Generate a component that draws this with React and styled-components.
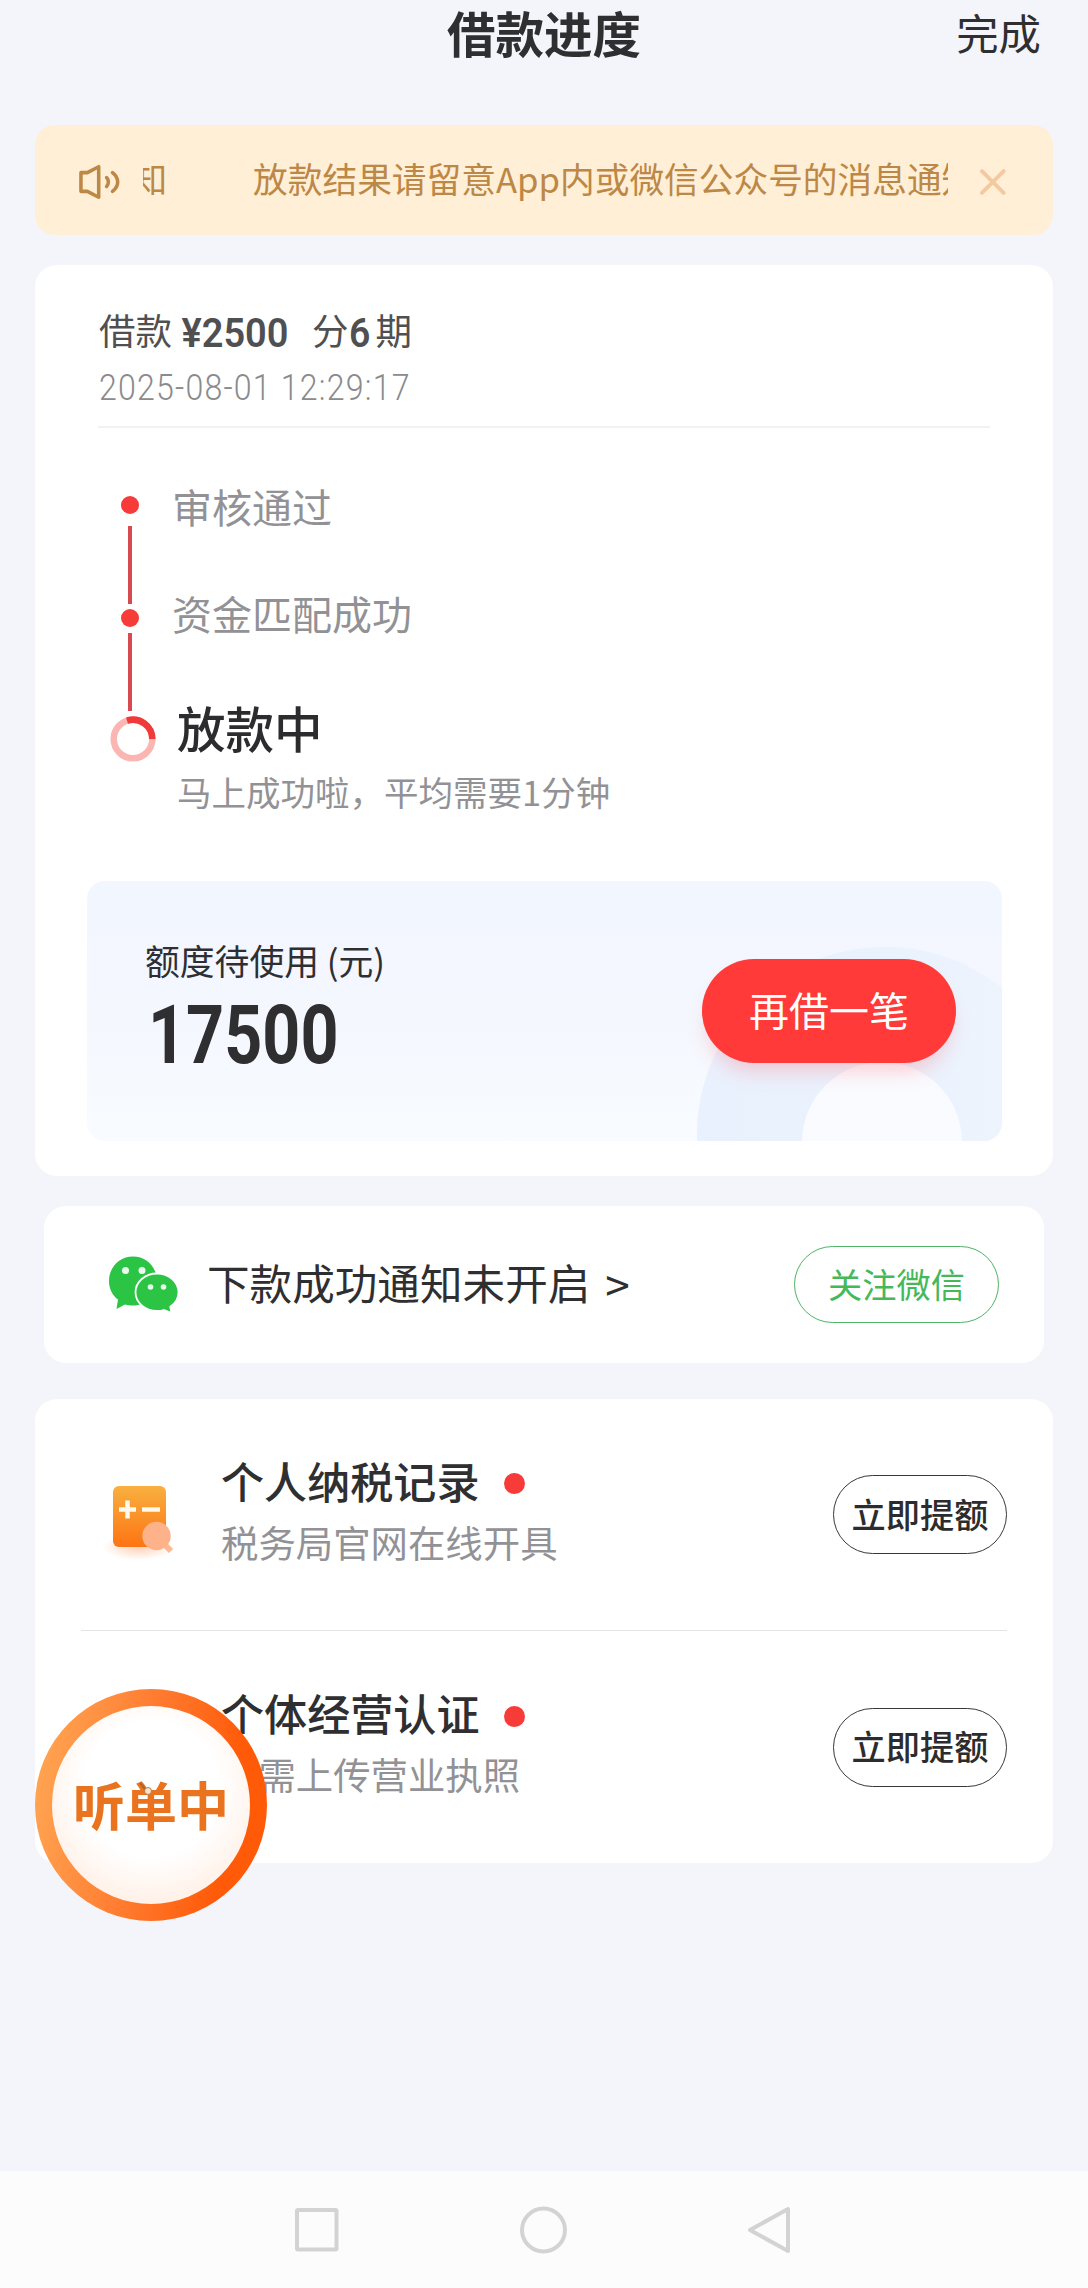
import React from 'react';
import styled, { createGlobalStyle } from 'styled-components';

const GlobalStyle = createGlobalStyle`
  * {
    box-sizing: border-box;
  }

  body {
    margin: 0;
    background: #f4f5fa;
    color: #2f2f31;
    font-family: "Noto Sans CJK SC", sans-serif;
  }
`;

const Page = styled.div`
  display: flex;
  flex-direction: column;
  width: 1088px;
  height: 2288px;
  overflow: hidden;
  background: #f4f5fa;
`;

const Header = styled.header`
  display: grid;
  grid-template-columns: 1fr auto 1fr;
  align-items: center;
  height: 64px;
  padding: 0 47px;
`;

const Title = styled.h1`
  grid-column: 2;
  margin: 0;
  font-size: 48.5px;
  font-weight: 700;
  line-height: 64px;
`;

const Done = styled.span`
  justify-self: end;
  font-size: 42.4px;
  line-height: 64px;
`;

const Notice = styled.div`
  display: flex;
  align-items: center;
  height: 110px;
  margin: 61px 35px 0;
  padding: 4px 46px 0 43px;
  border-radius: 20px;
  background: #feefd6;
`;

const Marquee = styled.div`
  display: flex;
  justify-content: flex-start;
  flex: none;
  gap: 86px;
  width: 805px;
  margin: -9px 31px 0 23px;
  overflow: hidden;
  color: #bd8746;
  font-size: 34.7px;
  line-height: 60px;
  white-space: nowrap;
`;

const MarqueeText = styled.span`
  flex: none;
  margin-left: ${props => props.$shift || 0}px;
`;

const Card = styled.section`
  margin: ${props => props.$margin};
  padding-bottom: ${props => props.$bottom || 0}px;
  border-radius: 22px;
  background: #fff;
`;

const LoanHead = styled.div`
  display: flex;
  flex-direction: column;
  height: 163px;
  margin: 0 63px;
  padding-top: 37px;
  border-bottom: 2px solid #f2f2f4;
`;

const LoanTitle = styled.div`
  display: flex;
  align-items: center;
  height: 54px;
  padding-left: 1px;
  color: #505052;
  font-size: 36.5px;
`;

const Digits = styled.span`
  display: block;
  width: ${props => props.$width}px;
  padding-top: ${props => props.$drop || 0}px;
  font-family: Roboto, sans-serif;
  font-size: ${props => props.$size}px;
  font-weight: ${props => props.$weight};
  letter-spacing: ${props => props.$spacing || 0}px;
  line-height: 1;
  white-space: nowrap;
  transform: scaleX(${props => props.$stretch});
  transform-origin: 0 50%;
`;

const LoanTime = styled.div`
  height: 40px;
  margin-top: 14px;
  padding-left: 1px;
  color: #8b8b8d;
`;

const Timeline = styled.div`
  display: flex;
  height: 453px;
  padding: 68px 0 0 75px;
`;

const Rail = styled.div`
  display: flex;
  flex-direction: column;
  align-items: center;
  width: 40px;
`;

const Dot = styled.i`
  flex: none;
  width: ${props => props.$size}px;
  height: ${props => props.$size}px;
  margin-top: ${props => props.$drop || 0}px;
  border-radius: 50%;
  background: #f73b38;
`;

const Line = styled.i`
  flex: none;
  width: 4px;
  height: 78px;
  margin: ${props => props.$margin};
  background: #d74b50;
`;

const Ring = styled.svg`
  flex: none;
  width: 46px;
  height: 46px;
  margin: 5px 0 0 6px;
`;

const Steps = styled.div`
  display: flex;
  flex-direction: column;
  padding-left: 22px;
  margin-top: -10px;
`;

const Step = styled.div`
  height: ${props => props.$height}px;
  padding-left: ${props => props.$indent || 0}px;
  color: ${props => props.$active ? '#2c2c2e' : '#929296'};
  font-size: ${props => props.$active ? 48.5 : 40}px;
  font-weight: ${props => props.$active ? 500 : 400};
  line-height: 1;
`;

const StepHint = styled.div`
  padding-left: 5px;
  color: #929296;
  font-size: 34.5px;
  line-height: 1;
  white-space: nowrap;
`;

const Quota = styled.div`
  position: relative;
  display: flex;
  align-items: flex-start;
  justify-content: space-between;
  height: 260px;
  margin: 0 51px 0 52px;
  padding: 0 46px 0 58px;
  border-radius: 18px;
  overflow: hidden;
  background: linear-gradient(180deg, #f2f6fe 0%, #f4f7fe 50%, #f8fbff 100%);
`;

const QuotaArt = styled.svg`
  position: absolute;
  right: 0;
  bottom: 0;
  width: 320px;
  height: 260px;
`;

const QuotaInfo = styled.div`
  padding-top: 62px;
`;

const QuotaLabel = styled.div`
  height: 51px;
  font-size: 34.8px;
  line-height: 1;
  white-space: nowrap;
`;

const QuotaAmount = styled.div`
  padding-left: 3px;
`;

const BorrowButton = styled.button`
  position: relative;
  width: 254px;
  height: 104px;
  margin-top: 78px;
  padding: 0 0 4px;
  border: 0;
  border-radius: 52px;
  background: #ff3a38;
  box-shadow: 0 14px 20px -6px rgba(255, 90, 100, 0.28);
  color: #fff;
  font-family: inherit;
  font-size: 40px;
  line-height: 1;
`;

const WechatRow = styled.div`
  display: flex;
  align-items: center;
  height: 157px;
  padding: 0 45px 0 64px;
`;

const WechatIcon = styled.svg`
  width: 72px;
  height: 58px;
  margin-top: -2px;
`;

const WechatText = styled.span`
  margin: -6px 0 0 27px;
  font-size: 42.6px;
  line-height: 60px;
  white-space: nowrap;
`;

const WechatArrow = styled.span`
  flex: 1;
  margin: -3px 0 0 15px;
  font-size: 44px;
  line-height: 60px;
`;

const OutlineButton = styled.button`
  width: ${props => props.$width}px;
  height: ${props => props.$height}px;
  padding: 0 0 3px;
  border: ${props => props.$border}px solid ${props => props.$color};
  border-radius: 40px;
  background: #fff;
  color: ${props => props.$text};
  font-family: inherit;
  font-size: 34.2px;
  font-weight: ${props => props.$weight};
  line-height: 1;
  white-space: nowrap;
`;

const TaskRow = styled.div`
  display: flex;
  align-items: center;
  height: 232px;
  margin: 0 46px;
  border-bottom: ${props => props.$last ? '0' : '1px solid #e4e4e6'};
`;

const TaskIcon = styled.svg`
  flex: none;
  width: 90px;
  height: 90px;
  margin-left: 18px;
`;

const TaskBody = styled.div`
  flex: 1;
  height: 232px;
  margin-left: 32px;
  padding-top: 50px;
`;

const TaskName = styled.div`
  display: flex;
  align-items: center;
  gap: 24px;
  height: 64px;
  font-size: 43.1px;
  font-weight: 500;
  line-height: 1;
`;

const TaskHint = styled.div`
  height: 56px;
  margin-top: 11px;
  color: #929296;
  font-size: 37.4px;
  line-height: 1;
`;

const Floating = styled.div`
  position: absolute;
  left: 35px;
  top: 1689px;
  width: 232px;
  height: 232px;
  padding: 17px;
  border-radius: 50%;
  background: linear-gradient(100deg, #ffa552 5%, #ff7c31 45%, #ff5a08 80%);
`;

const FloatingFace = styled.div`
  display: flex;
  align-items: center;
  justify-content: center;
  width: 198px;
  height: 198px;
  padding-bottom: 3px;
  border-radius: 50%;
  background: radial-gradient(circle at 50% 42%, #fff 45%, #ffeee3 82%, #ffe3d0 100%);
  background-size: 100% 100%;
  color: #e9731f;
  font-size: 52px;
  font-weight: 700;
  line-height: 1;
`;

const Spark = styled.svg`
  position: absolute;
  left: 103px;
  top: 92px;
  width: 18px;
  height: 18px;
`;

const NavBar = styled.nav`
  display: flex;
  align-items: center;
  height: 117px;
  margin-top: auto;
  padding-left: 292px;
  gap: 177px;
  background: #fcfcfc;
`;

const NavIcon = styled.svg`
  width: 50px;
  height: 50px;
  fill: none;
  stroke: #d3d3d3;
  stroke-width: 4;
  stroke-linejoin: round;
`;

const IconSpeaker = () => (
  <svg width="43" height="38" viewBox="0 0 43 38" fill="none" stroke="#bd8746" strokeWidth="3.6" strokeLinejoin="round" strokeLinecap="round">
    <path d="M3 9.500h6.500L21 3.500v31L9.500 28.500H3z" />
    <path d="M29 14.500c2.400 2.400 2.400 6.600 0 9" />
    <path d="M35 9.500c7 5.500 7 13.500 0 19" />
  </svg>
);

const IconClose = () => (
  <svg width="28" height="28" viewBox="0 0 28 28" stroke="#f5c9a0" strokeWidth="4" strokeLinecap="round">
    <path d="M3 3l22 22M25 3L3 25" />
  </svg>
);

const IconTax = () => (
  <TaskIcon viewBox="0 0 90 90">
    <defs>
      <linearGradient id="tax" x1="0" y1="0" x2="0" y2="1">
        <stop offset="0" stopColor="#f8b03f" />
        <stop offset="1" stopColor="#fd7414" />
      </linearGradient>
      <radialGradient id="taxShadow">
        <stop offset="0" stopColor="#ff8a4a" stopOpacity="0.4" />
        <stop offset="1" stopColor="#ff8a4a" stopOpacity="0" />
      </radialGradient>
    </defs>
    <ellipse cx="40" cy="77" rx="36" ry="13" fill="url(#taxShadow)" />
    <rect x="14" y="16" width="53" height="61" rx="6" fill="url(#tax)" />
    <path d="M20 39.500h17M28.500 30.500v18M43 39.500h18" stroke="#fff8ec" strokeWidth="4.500" />
    <path d="M66 75l6 6" stroke="#fdb995" strokeWidth="6" />
    <circle cx="57.500" cy="66" r="14.200" fill="#fdb28a" />
  </TaskIcon>
);

const tasks = [
  { name: '个人纳税记录', hint: '税务局官网在线开具', icon: true },
  { name: '个体经营认证', hint: '仅需上传营业执照', icon: false },
];

const notice = '放款结果请留意App内或微信公众号的消息通知';

const App = () => {
  return (
    <Page>
      <GlobalStyle />
      <Header>
        <Title>借款进度</Title>
        <Done>完成</Done>
      </Header>

      <Notice>
        <IconSpeaker />
        <Marquee>
          <MarqueeText $shift={-11}>知</MarqueeText>
          <MarqueeText>{notice}</MarqueeText>
        </Marquee>
        <IconClose />
      </Notice>

      <Card $margin="30px 35px 0" $bottom={35}>
        <LoanHead>
          <LoanTitle>
            借款
            <Digits $size={41.5} $weight={600} $width={140} $stretch={0.915} $drop={7}>&nbsp;¥2500</Digits>
            分
            <Digits $size={41.5} $weight={600} $width={27} $stretch={0.9} $drop={7}>6</Digits>
            期
          </LoanTitle>
          <LoanTime>
            <Digits $size={36.5} $weight={300} $width={310} $stretch={0.88} $spacing={1.35}>2025-08-01 12:29:17</Digits>
          </LoanTime>
        </LoanHead>

        <Timeline>
          <Rail>
            <Dot $size={18} />
            <Line $margin="12px 0 5px" />
            <Dot $size={18} />
            <Line $margin="6px 0 0" />
            <Ring viewBox="0 0 46 46" fill="none" strokeWidth="6.5">
              <circle cx="23" cy="23" r="19.300" stroke="#fbb5b3" />
              <path d="M17 4.700A19.300 19.300 0 0 1 42.300 23" stroke="#f03a3a" />
            </Ring>
          </Rail>
          <Steps>
            <Step $height={107}>审核通过</Step>
            <Step $height={110}>资金匹配成功</Step>
            <Step $height={71} $indent={5} $active>放款中</Step>
            <StepHint>马上成功啦，平均需要1分钟</StepHint>
          </Steps>
        </Timeline>

        <Quota>
          <QuotaArt viewBox="0 0 320 260">
            <defs>
              <linearGradient id="arc" x1="0" y1="0" x2="1" y2="0">
                <stop offset="0" stopColor="#e9f1fe" />
                <stop offset="0.6" stopColor="#eaf2fd" />
                <stop offset="1" stopColor="#f1f6fe" />
              </linearGradient>
            </defs>
            <circle cx="203" cy="254" r="188" fill="url(#arc)" />
            <circle cx="200" cy="261" r="80" fill="#f9fbff" />
          </QuotaArt>
          <QuotaInfo>
            <QuotaLabel>额度待使用 (元)</QuotaLabel>
            <QuotaAmount>
              <Digits $size={82} $weight={700} $width={200} $stretch={0.81}>17500</Digits>
            </QuotaAmount>
          </QuotaInfo>
          <BorrowButton>再借一笔</BorrowButton>
        </Quota>
      </Card>

      <Card $margin="30px 44px 0">
        <WechatRow>
          <WechatIcon viewBox="0 0 72 58">
            <path fill="#2bc444" d="M25 1.500C11.500 1.500 1 12 1 26c0 8 3.500 14.500 9 18.500L8.500 54l8.500-4.500c2.500.8 5 1 8 1 13.500 0 24-10.500 24-24.500S38.500 1.500 25 1.500z" />
            <path fill="#2bc444" stroke="#fff" strokeWidth="1.800" d="M49 18.500c-12 0-21.500 8.500-21.500 18.700S37 56 49 56c2.500 0 4.800-.3 7-1l7.500 3-1.200-6.300c5-3.400 8.200-8.700 8.200-14.500C70.500 27 61 18.500 49 18.500z" />
            <g fill="#e9fbec">
              <circle cx="17.500" cy="15.500" r="3.500" />
              <circle cx="34" cy="15.500" r="3.500" />
              <circle cx="42.500" cy="32" r="2.800" />
              <circle cx="55.500" cy="32" r="2.800" />
            </g>
          </WechatIcon>
          <WechatText>下款成功通知未开启</WechatText>
          <WechatArrow>&gt;</WechatArrow>
          <OutlineButton $width={205} $height={77} $border={1} $color="#4db565" $text="#45b95a" $weight={400}>
            关注微信
          </OutlineButton>
        </WechatRow>
      </Card>

      <Card $margin="36px 35px 0">
        {tasks.map((task, index) => (
          <TaskRow key={task.name} $last={index === tasks.length - 1}>
            {task.icon ? <IconTax /> : <TaskIcon />}
            <TaskBody>
              <TaskName>
                {task.name}
                <Dot $size={21} $drop={6} />
              </TaskName>
              <TaskHint>{task.hint}</TaskHint>
            </TaskBody>
            <OutlineButton $width={174} $height={79} $border={1.5} $color="#38383a" $text="#2c2c2e" $weight={500}>
              立即提额
            </OutlineButton>
          </TaskRow>
        ))}
      </Card>

      <NavBar>
        <NavIcon viewBox="0 0 50 50">
          <rect x="5" y="5" width="39.500" height="39.500" rx="1" />
        </NavIcon>
        <NavIcon viewBox="0 0 50 50">
          <circle cx="24.500" cy="25" r="21.500" />
        </NavIcon>
        <NavIcon viewBox="0 0 50 50">
          <path d="M42 4v42L4 25z" />
        </NavIcon>
      </NavBar>

      <Floating>
        <FloatingFace>听单中</FloatingFace>
        <Spark viewBox="0 0 18 18">
          <path d="M2 2l6 7" stroke="#a9662e" strokeWidth="2" />
          <circle cx="10" cy="10" r="3.500" fill="#f9e3cd" stroke="#b87a45" />
        </Spark>
      </Floating>
    </Page>
  );
};

export default App;
